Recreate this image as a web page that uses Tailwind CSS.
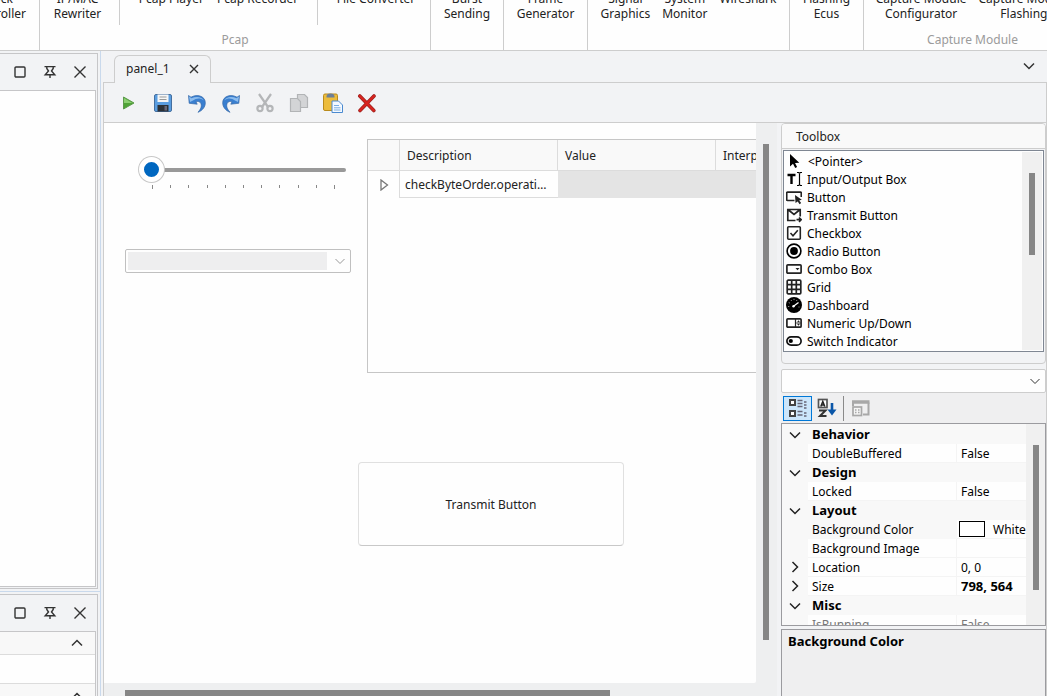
<!DOCTYPE html>
<html lang="en" class="h-full">

<head>
    <meta charset="UTF-8">
    <meta name="viewport" content="width=device-width, initial-scale=1.0">
    <title>panel_1</title>
    <script src="https://cdn.jsdelivr.net/npm/@tailwindcss/browser@4"></script>
</head>

<body class="h-screen flex flex-col overflow-hidden bg-[#f2f3f5] font-['Noto_Sans',sans-serif] text-[12px] leading-[15px] text-[#222]">
    <!-- Ribbon -->
    <header class="h-[51px] shrink-0 flex overflow-hidden bg-[#fefefe] border-b border-[#cdcdcd]">
        <div class="w-10 shrink-0 flex justify-end items-start pr-[13px] overflow-hidden border-r border-[#cdcdcd]">
            <button class="-mt-[9px] shrink-0">Clock<br>Controller</button>
        </div>
        <div class="w-[391px] shrink-0 flex flex-col border-r border-[#cdcdcd]">
            <div class="h-[25px] flex">
                <div class="w-20 flex justify-center items-start pr-1 border-r border-[#cdcdcd]">
                    <button class="-mt-[9px]">IP/MAC<br>Rewriter</button>
                </div>
                <div class="w-[198px] flex justify-center items-start gap-[13px] border-r border-[#cdcdcd]">
                    <button class="-mt-[9px]">Pcap Player</button>
                    <button class="-mt-[9px]">Pcap Recorder</button>
                </div>
                <div class="flex-1 flex justify-center items-start pl-1">
                    <button class="-mt-[9px]">File Converter</button>
                </div>
            </div>
            <p class="pt-[7px] text-center text-[#9b9b9b]">Pcap</p>
        </div>
        <div class="w-[73px] shrink-0 flex justify-center items-start border-r border-[#cdcdcd]">
            <button class="-mt-[9px]">Burst<br>Sending</button>
        </div>
        <div class="w-[84px] shrink-0 flex justify-center items-start border-r border-[#cdcdcd]">
            <button class="-mt-[9px]">Frame<br>Generator</button>
        </div>
        <div class="w-[202px] shrink-0 flex justify-center items-start gap-3 border-r border-[#cdcdcd]">
            <button class="-mt-[9px]">Signal<br>Graphics</button>
            <button class="-mt-[9px]">System<br>Monitor</button>
            <button class="-mt-[9px]">Wireshark</button>
        </div>
        <div class="w-[74px] shrink-0 flex justify-center items-start border-r border-[#cdcdcd]">
            <button class="-mt-[9px]">Flashing<br>Ecus</button>
        </div>
        <div class="w-[217px] shrink-0 flex flex-col">
            <div class="h-[25px] flex justify-center items-start gap-3">
                <button class="-mt-[9px]">Capture Module<br>Configurator</button>
                <button class="-mt-[9px]">Capture Module<br>Flashing</button>
            </div>
            <p class="pt-[7px] text-center text-[#9b9b9b]">Capture Module</p>
        </div>
    </header>

    <div class="flex-1 min-h-0 flex">
        <!-- Left dock -->
        <aside class="w-[101px] shrink-0 flex flex-col pt-0.5 border-r border-[#c9d9ec]">
            <section class="h-[536px] w-[98px] shrink-0 flex flex-col pr-px pb-px border-y border-r border-[#c6c6c8]">
                <div class="h-9 shrink-0 flex items-center justify-end gap-[14px] pr-2">
                    <button aria-label="Maximize">
                        <svg class="w-4 h-4" viewBox="0 0 16 16" fill="none" stroke="#333" stroke-width="1.4"><rect x="3" y="3" width="10" height="10" rx="1" /></svg>
                    </button>
                    <button aria-label="Pin">
                        <svg class="w-4 h-4" viewBox="0 0 16 16" fill="none" stroke="#333" stroke-width="1.4"><path d="M2.5 2.600h11M4.800 3v1.500L6.500 7 3.200 10.800h9.600L9.500 7l1.700-2.500V3M8 10.800V14" /></svg>
                    </button>
                    <button aria-label="Close">
                        <svg class="w-4 h-4" viewBox="0 0 16 16" fill="none" stroke="#333" stroke-width="1.4"><path d="M2.500 2.500l11 11M13.500 2.500l-11 11" /></svg>
                    </button>
                </div>
                <div class="flex-1 bg-[#fefefe] border-y border-r border-[#c6c6c8]"></div>
            </section>
            <div class="mt-0.5 h-px shrink-0 bg-[#c9d9ec]"></div>
            <section class="mt-0.5 w-[98px] flex-1 min-h-0 flex flex-col pr-px overflow-hidden border-t border-r border-[#c6c6c8]">
                <div class="h-9 shrink-0 flex items-center justify-end gap-[14px] pr-2">
                    <button aria-label="Maximize">
                        <svg class="w-4 h-4" viewBox="0 0 16 16" fill="none" stroke="#333" stroke-width="1.4"><rect x="3" y="3" width="10" height="10" rx="1" /></svg>
                    </button>
                    <button aria-label="Pin">
                        <svg class="w-4 h-4" viewBox="0 0 16 16" fill="none" stroke="#333" stroke-width="1.4"><path d="M2.5 2.600h11M4.800 3v1.500L6.500 7 3.200 10.800h9.600L9.500 7l1.700-2.500V3M8 10.800V14" /></svg>
                    </button>
                    <button aria-label="Close">
                        <svg class="w-4 h-4" viewBox="0 0 16 16" fill="none" stroke="#333" stroke-width="1.4"><path d="M2.500 2.500l11 11M13.500 2.500l-11 11" /></svg>
                    </button>
                </div>
                <div class="border-t border-r border-[#c6c6c8] bg-[#fefefe]">
                    <button aria-label="Collapse" class="w-full h-[23px] flex items-center justify-end pr-3 bg-[#f8f8f8] border-b border-[#dcdcdc]">
                        <svg class="w-3 h-3" viewBox="0 0 12 12" fill="none" stroke="#333" stroke-width="1.500"><path d="M1 8.500l5-5 5 5" /></svg>
                    </button>
                    <div class="h-7"></div>
                    <button aria-label="Collapse" class="w-full h-6 flex items-center justify-end pr-3 bg-[#f8f8f8] border-t border-[#dcdcdc]">
                        <svg class="w-3 h-3" viewBox="0 0 12 12" fill="none" stroke="#333" stroke-width="1.500"><path d="M1 8.500l5-5 5 5" /></svg>
                    </button>
                </div>
            </section>
        </aside>

        <!-- Document area -->
        <main class="flex-1 min-w-0 flex flex-col pl-0.5">
            <div class="h-8 shrink-0 flex items-end border-b border-[#cdcdcd] pl-[11px] pr-3">
                <div class="h-7 -mb-px w-[97px] flex items-center justify-between pl-[11px] pr-2.5 pb-0.5 bg-[#f2f3f5] border border-b-0 border-[#cdcdcd] rounded-t-md">
                    <span>panel_1</span>
                    <button aria-label="Close tab">
                        <svg class="w-3 h-3" viewBox="0 0 12 12" fill="none" stroke="#333" stroke-width="1.400"><path d="M2 2l8 8M10 2l-8 8" /></svg>
                    </button>
                </div>
                <button aria-label="Open documents" class="ml-auto mb-2.5">
                    <svg class="w-3 h-3" viewBox="0 0 12 12" fill="none" stroke="#333" stroke-width="1.500"><path d="M1 3.500l5 5 5-5" /></svg>
                </button>
            </div>

            <div class="flex-1 min-h-0 flex flex-col border-x border-[#cdcdcd]">
                <!-- Toolbar -->
                <div class="h-10 shrink-0 flex items-center gap-[14px] pl-[15px] border-b border-[#cdcdcd]">
                    <button aria-label="Run">
                        <svg class="w-5 h-5" viewBox="0 0 20 20"><path d="M4.500 4l10.500 6-10.500 6z" fill="#4fa336" stroke="#5c9a4a" /><path d="M5 5l8.500 5H5z" fill="#8bcf70" /></svg>
                    </button>
                    <button aria-label="Save">
                        <svg class="w-5 h-5" viewBox="0 0 20 20"><rect x="1.500" y="1.500" width="17" height="17" rx="1.500" fill="#5a9de0" stroke="#456f9f" /><path d="M4.500 1.500h11v7.500h-11z" fill="#f6f6f6" /><path d="M6.500 4h7M6.500 6.500h7" stroke="#999" /><path d="M4.500 12h11v6.500h-11z" fill="#2c3137" /><path d="M11.500 13h2.500v4.500h-2.500z" fill="#667" /></svg>
                    </button>
                    <button aria-label="Undo">
                        <svg class="w-5 h-5" viewBox="0 0 20 20"><path d="M1.500 2.500L4 4.200C10 .8 18 3 18.300 9.500c.1 4.500-2.800 8-7.300 9.800 3-3.500 4-6.300 2.800-9-.8-1.900-2.800-2.200-4.800-1.500l1.200 2.400-8-.9z" fill="#3a7fd0" stroke="#3668a8" stroke-width=".7" /><path d="M2 3.500l2.500 1.700C9 3 15 3.500 16.800 7.500 13 4.500 9 5.500 6 7.500L3 9z" fill="#8dbdee" /></svg>
                    </button>
                    <button aria-label="Redo">
                        <svg class="w-5 h-5" viewBox="0 0 20 20"><path d="M18.500 2.500L16 4.200C10 .8 2 3 1.700 9.500c-.1 4.500 2.800 8 7.300 9.800-3-3.500-4-6.300-2.800-9 .8-1.900 2.800-2.200 4.800-1.500l-1.200 2.400 8-.9z" fill="#3a7fd0" stroke="#3668a8" stroke-width=".7" /><path d="M18 3.500l-2.500 1.700C11 3 5 3.500 3.200 7.500 7 4.500 11 5.500 14 7.500L17 9z" fill="#8dbdee" /></svg>
                    </button>
                    <button aria-label="Cut">
                        <svg class="w-5 h-5" viewBox="0 0 20 20" fill="none" stroke="#b4b6b8" stroke-width="2.200"><path d="M4 1l9 13M16 1L7 14" /><circle cx="5" cy="15.500" r="2.600" /><circle cx="15" cy="15.500" r="2.600" /></svg>
                    </button>
                    <button aria-label="Copy">
                        <svg class="w-5 h-5" viewBox="0 0 20 20" fill="#d3d4d6" stroke="#b2b4b6" stroke-width="1.200"><path d="M8.500 1.500h7l3 3v10h-10z" /><path d="M1.500 5.500h7l3 3v10h-10z" /></svg>
                    </button>
                    <button aria-label="Paste">
                        <svg class="w-5 h-5" viewBox="0 0 20 20"><rect x=".5" y="1" width="14" height="16.500" rx="1.500" fill="#ecbc3c" stroke="#b98a1c" /><path d="M3.500 3.500C3.500 1.500 5 .5 7.500 .5s4 1 4 3v1h-8z" fill="#6d7f96" /><path d="M9 8h6.500l4 4v7.500H9z" fill="#f4f9ff" stroke="#4b8ad0" /><path d="M11 12.500h5M11 14.800h6.500M11 17h6.500" stroke="#7aaee2" /></svg>
                    </button>
                    <button aria-label="Delete">
                        <svg class="w-5 h-5" viewBox="0 0 20 20" fill="none" stroke-linecap="round"><path d="M2.800 3l14 14.500M17 3L3 17.500" stroke="#9c2320" stroke-width="3.600" /><path d="M2.800 3l14 14.500M17 3L3 17.500" stroke="#d8241f" stroke-width="2.200" /></svg>
                    </button>
                </div>

                <div class="flex-1 min-h-0 flex">
                    <!-- Design surface -->
                    <div class="flex-1 min-w-0 flex flex-col bg-[#eeeff0]">
                        <div class="h-[560px] shrink-0 flex">
                            <div class="relative flex-1 overflow-hidden bg-[#fefefe] rounded-br-xs">
                                <!-- track bar -->
                                <div class="absolute left-[35px] top-[34px] w-[207px]">
                                    <input type="range" min="0" max="10" value="0" aria-label="Track bar"
                                        class="block w-full h-[25px] appearance-none bg-transparent [&::-webkit-slider-runnable-track]:h-1 [&::-webkit-slider-runnable-track]:rounded-full [&::-webkit-slider-runnable-track]:bg-[#999] [&::-webkit-slider-thumb]:appearance-none [&::-webkit-slider-thumb]:w-[25px] [&::-webkit-slider-thumb]:h-[25px] [&::-webkit-slider-thumb]:-mt-[11px] [&::-webkit-slider-thumb]:rounded-full [&::-webkit-slider-thumb]:border-[5px] [&::-webkit-slider-thumb]:border-white [&::-webkit-slider-thumb]:bg-[#0067c0] [&::-webkit-slider-thumb]:shadow-[0_0_0_1px_#c8c8c8]">
                                    <div class="mt-[3px] ml-[13px] w-[183px] flex justify-between">
                                        <i class="w-px h-1 bg-[#888]"></i>
                                        <i class="w-px h-[3px] bg-[#888]"></i>
                                        <i class="w-px h-[3px] bg-[#888]"></i>
                                        <i class="w-px h-[3px] bg-[#888]"></i>
                                        <i class="w-px h-[3px] bg-[#888]"></i>
                                        <i class="w-px h-[3px] bg-[#888]"></i>
                                        <i class="w-px h-[3px] bg-[#888]"></i>
                                        <i class="w-px h-[3px] bg-[#888]"></i>
                                        <i class="w-px h-[3px] bg-[#888]"></i>
                                        <i class="w-px h-[3px] bg-[#888]"></i>
                                        <i class="w-px h-1 bg-[#888]"></i>
                                    </div>
                                </div>
                                <!-- combo box -->
                                <div class="absolute left-[21px] top-[126px] w-[226px] h-6 flex items-center p-0.5 pr-1 bg-[#fefefe] border border-[#c0c0c0] rounded-xs">
                                    <select aria-label="Combo box" class="flex-1 h-[18px] appearance-none bg-[#eeeeef]"><option></option></select>
                                    <svg class="w-3 h-3 ml-[7px]" viewBox="0 0 12 12" fill="none" stroke="#999"><path d="M1.500 4L6 8.500 10.500 4" /></svg>
                                </div>
                                <!-- signal grid -->
                                <div class="absolute left-[263px] top-4 w-[600px] h-[234px] border border-[#c6c6c6]">
                                    <table class="w-full table-fixed border-separate border-spacing-0 text-left">
                                        <thead>
                                            <tr class="h-[31px] bg-[#f9f9f9]">
                                                <th class="w-8 border-r border-b border-[#dcdcdc]"></th>
                                                <th class="w-[158px] px-[7px] font-normal border-r border-b border-[#dcdcdc]">Description</th>
                                                <th class="w-[158px] px-[7px] font-normal border-r border-b border-[#dcdcdc]">Value</th>
                                                <th class="px-[7px] font-normal border-b border-[#dcdcdc]">Interpretation</th>
                                            </tr>
                                        </thead>
                                        <tbody>
                                            <tr class="h-[27px]">
                                                <td class="border-r border-[#dcdcdc]">
                                                    <svg class="w-3 h-3 ml-2.5" viewBox="0 0 12 12" fill="none" stroke="#777" stroke-width="1.300"><path d="M3 1L9.500 6 3 11z" /></svg>
                                                </td>
                                                <td class="px-[5px] truncate border-b border-[#dcdcdc]">checkByteOrder.operationResult</td>
                                                <td class="bg-[#e4e4e4]"></td>
                                                <td class="bg-[#e4e4e4]"></td>
                                            </tr>
                                        </tbody>
                                    </table>
                                </div>
                                <button class="absolute left-[254px] top-[339px] w-[266px] h-[84px] rounded border border-[#e0e0e0] border-b-[#c8c8c8]">Transmit Button</button>
                            </div>
                            <div class="w-[21px] shrink-0 pl-[7px] pt-[21px]">
                                <div class="w-1.5 h-[496px] bg-[#868686]"></div>
                            </div>
                        </div>
                        <div class="pl-[21px] pt-[7px]">
                            <div class="w-[485px] h-1.5 bg-[#868686]"></div>
                        </div>
                    </div>

                    <!-- Toolbox and properties -->
                    <div class="w-[269px] shrink-0 flex flex-col pl-1 text-black">
                        <section class="h-[241px] shrink-0 flex flex-col border border-[#cdcdcd] rounded overflow-hidden">
                            <h2 class="h-[25px] flex items-center pl-[14px] bg-[#f9f9f9] border-b border-[#cdcdcd] text-[#222]">Toolbox</h2>
                            <div class="mt-px mx-px h-[202px] flex border border-[#7f8793] bg-[#fefefe]">
                                <ul class="flex-1 pt-px pl-0.5">
                                    <li class="h-[18px] flex items-center gap-1.5">
                                        <svg class="w-4 h-4" viewBox="0 0 16 16"><path d="M4 1v12.500l3-2.700 2.200 4.200 1.900-.9-2.100-4.100 4.300-.2z" /></svg>
                                        &lt;Pointer&gt;
                                    </li>
                                    <li class="h-[18px] flex items-center gap-[5px]">
                                        <svg class="w-4 h-4" viewBox="0 0 16 16" fill="none" stroke="#000"><path d="M1.500 4h8M5.500 4v9" stroke-width="2.400" /><path d="M11 1.500h1.500l1 .8 1-.8H16M13.500 2v12M11 14.500h1.500l1-.8 1 .8H16" stroke-width="1.200" /></svg>
                                        Input/Output Box
                                    </li>
                                    <li class="h-[18px] flex items-center gap-[5px]">
                                        <svg class="w-4 h-4" viewBox="0 0 16 16"><path d="M8.500 11.500H1.500a.8.800 0 01-.8-.8V4a.8.800 0 01.8-.8h13a.8.800 0 01.8.8v4" fill="none" stroke="#222" stroke-width="1.700" /><path d="M9 6l6.800 4.700-2.600.8 2 2.600-1.600 1.200-1.900-2.700L9.500 14z" fill="#222" /></svg>
                                        Button
                                    </li>
                                    <li class="h-[18px] flex items-center gap-[5px]">
                                        <svg class="w-4 h-4" viewBox="0 0 16 16" fill="none" stroke="#222" stroke-width="1.700"><path d="M9.500 13.500H1.800V2.500h12.400v7M2.500 3l5.500 4.500L13.500 3" /><path d="M10.500 12.700h4M13 10.500l2.200 2.200-2.200 2.200" /></svg>
                                        Transmit Button
                                    </li>
                                    <li class="h-[18px] flex items-center gap-[5px]">
                                        <svg class="w-4 h-4" viewBox="0 0 16 16" fill="none" stroke="#222" stroke-width="1.600"><rect x="1.700" y="1.700" width="12.600" height="12.600" rx="1" /><path d="M4.500 8l2.500 2.700L11.800 5.300" /></svg>
                                        Checkbox
                                    </li>
                                    <li class="h-[18px] flex items-center gap-[5px]">
                                        <svg class="w-4 h-4" viewBox="0 0 16 16"><circle cx="8" cy="8" r="6.900" fill="none" stroke="#000" stroke-width="1.600" /><circle cx="8" cy="8" r="3.900" /></svg>
                                        Radio Button
                                    </li>
                                    <li class="h-[18px] flex items-center gap-[5px]">
                                        <svg class="w-4 h-4" viewBox="0 0 16 16"><rect x=".9" y="3.800" width="14.200" height="8.400" rx="1" fill="none" stroke="#222" stroke-width="1.700" /><path d="M9.500 7h4l-2 2.200z" fill="#222" /></svg>
                                        Combo Box
                                    </li>
                                    <li class="h-[18px] flex items-center gap-[5px]">
                                        <svg class="w-4 h-4" viewBox="0 0 16 16" fill="none" stroke="#222" stroke-width="1.700"><rect x="1.200" y="1.200" width="13.600" height="13.600" rx="1" /><path d="M5.700 1v14M10.300 1v14M1 5.700h14M1 10.300h14" /></svg>
                                        Grid
                                    </li>
                                    <li class="h-[18px] flex items-center gap-[5px]">
                                        <svg class="w-4 h-4" viewBox="0 0 16 16"><circle cx="8" cy="8" r="8" /><path d="M7.500 9.200l5-3.700" stroke="#fff" stroke-width="1.300" /><circle cx="7.500" cy="9.200" r="1.200" fill="#fff" /><path d="M2 9.500h1.300M2.700 5.500l1.200.6M5 3l.7 1M8 1.800v1.300M11 3l-.6 1M13.500 10h-1" stroke="#ccc" stroke-width=".7" /></svg>
                                        Dashboard
                                    </li>
                                    <li class="h-[18px] flex items-center gap-[5px]">
                                        <svg class="w-4 h-4" viewBox="0 0 16 16" fill="none" stroke="#222" stroke-width="1.700"><rect x=".9" y="3.800" width="14.200" height="8.400" rx="1" /><path d="M9.500 4v8" stroke-width="1.200" /><path d="M11 7.200h3l-1.500-2zM11 8.800h3l-1.500 2z" fill="#222" stroke="none" /><path d="M10 8h5" stroke-width=".7" /></svg>
                                        Numeric Up/Down
                                    </li>
                                    <li class="h-[18px] flex items-center gap-[5px]">
                                        <svg class="w-4 h-4" viewBox="0 0 16 16"><rect x=".9" y="3.800" width="14.200" height="8.400" rx="4.200" fill="none" stroke="#111" stroke-width="1.700" /><circle cx="4.800" cy="8" r="2.100" /></svg>
                                        Switch Indicator
                                    </li>
                                </ul>
                                <div class="my-px mr-px w-5 pl-[7px] pt-[21px] bg-[#f0f0f0]">
                                    <div class="w-1.5 h-[82px] bg-[#868686]"></div>
                                </div>
                            </div>
                        </section>

                        <div class="mt-[5px] h-6 shrink-0 flex items-center pr-1 bg-[#fefefe] border border-[#cdcdcd] rounded-xs">
                            <select aria-label="Selected component" class="flex-1 h-full appearance-none"><option></option></select>
                            <svg class="w-3 h-3" viewBox="0 0 12 12" fill="none" stroke="#333"><path d="M1.500 4L6 8.500 10.500 4" /></svg>
                        </div>

                        <div class="h-[30px] shrink-0 flex items-center pl-0.5 bg-[#efeff0]">
                            <button aria-label="Categorized" class="w-[29px] h-[25px] flex items-center justify-center bg-[#cce6fb] border border-[#0078d7]">
                                <svg class="w-5 h-5" viewBox="0 0 20 20" fill="#fff" stroke="#444" stroke-width="2"><rect x="2" y="2" width="5" height="5" /><rect x="2" y="13" width="5" height="5" /><path d="M9.500 2.500h5M9.500 5.500h5M9.500 8.500h5M9.500 13.500h5M9.500 17h5" stroke="#667" stroke-width="1.500" /><path d="M16 4h2.500M16 7h2.500M16 10h2.500M16 15h2.500M16 18h2.500" stroke="#667" stroke-width="1.500" /></svg>
                            </button>
                            <button aria-label="Alphabetical" class="w-[29px] h-[25px] flex items-center justify-center">
                                <svg class="w-5 h-5" viewBox="0 0 20 20" fill="none"><rect x="1.500" y="1.500" width="8.500" height="8" fill="#fff" stroke="#555" stroke-width="1.700" /><path d="M3.800 8.500l2-5 2 5M4.500 7h3" stroke="#222" stroke-width="1.500" /><path d="M2 12.500h6.500l-5.500 5.500h6.500" stroke="#333" stroke-width="2" /><path d="M15 5v9" stroke="#0a56a8" stroke-width="2.600" /><path d="M10.500 11.500h9L15 17.500z" fill="#0a56a8" /></svg>
                            </button>
                            <div class="ml-[2px] w-px h-[25px] bg-[#8a8a8a]"></div>
                            <button aria-label="Property pages" class="ml-[7px]" disabled>
                                <svg class="w-5 h-5" viewBox="0 0 20 20" fill="none" stroke="#a8a8a8"><path d="M1 4h17.500" stroke-width="3.500" /><path d="M2 5v3M12 16.500h5.500V4.500" stroke-width="2" /><rect x="2" y="9" width="8.500" height="8.500" fill="#f5f5f5" stroke-width="1.700" /><path d="M4 12h1.500M7 12h1.500M4 14.500h1.500M7 14.500h1.500" stroke-width="1.500" /></svg>
                            </button>
                        </div>

                        <!-- Property grid -->
                        <div class="h-[203px] shrink-0 flex overflow-hidden bg-[#f8f8f8] border border-[#9b9b9f]">
                            <table class="flex-1 block mt-px">
                                <tbody class="block">
                                    <tr class="flex h-[19px] items-center">
                                        <td class="w-[26px] shrink-0"><svg class="w-3 h-3 ml-[7px]" viewBox="0 0 12 12" fill="none" stroke="#222" stroke-width="1.500"><path d="M1 3.500l5 5 5-5" /></svg></td>
                                        <th class="pl-1 text-[13px] font-bold">Behavior</th>
                                    </tr>
                                    <tr class="flex h-[19px]">
                                        <td class="w-[26px] shrink-0"></td>
                                        <td class="w-[149px] shrink-0 pl-1 pt-0.5 bg-[#fefefe] border-r border-b border-[#f4f4f4]">DoubleBuffered</td>
                                        <td class="flex-1 pl-1 pt-0.5 bg-[#fefefe] border-b border-[#f4f4f4]">False</td>
                                    </tr>
                                    <tr class="flex h-[19px] items-center">
                                        <td class="w-[26px] shrink-0"><svg class="w-3 h-3 ml-[7px]" viewBox="0 0 12 12" fill="none" stroke="#222" stroke-width="1.500"><path d="M1 3.500l5 5 5-5" /></svg></td>
                                        <th class="pl-1 text-[13px] font-bold">Design</th>
                                    </tr>
                                    <tr class="flex h-[19px]">
                                        <td class="w-[26px] shrink-0"></td>
                                        <td class="w-[149px] shrink-0 pl-1 pt-0.5 bg-[#fefefe] border-r border-b border-[#f4f4f4]">Locked</td>
                                        <td class="flex-1 pl-1 pt-0.5 bg-[#fefefe] border-b border-[#f4f4f4]">False</td>
                                    </tr>
                                    <tr class="flex h-[19px] items-center">
                                        <td class="w-[26px] shrink-0"><svg class="w-3 h-3 ml-[7px]" viewBox="0 0 12 12" fill="none" stroke="#222" stroke-width="1.500"><path d="M1 3.500l5 5 5-5" /></svg></td>
                                        <th class="pl-1 text-[13px] font-bold">Layout</th>
                                    </tr>
                                    <tr class="flex h-[19px]">
                                        <td class="w-[26px] shrink-0"></td>
                                        <td class="w-[149px] shrink-0 pl-1 pt-0.5">Background Color</td>
                                        <td class="flex-1 min-w-0 flex items-center gap-2 pl-0.5 overflow-hidden bg-[#fefefe] border-b border-[#f4f4f4]"><span class="w-[26px] h-4 shrink-0 bg-white border border-black"></span>White</td>
                                    </tr>
                                    <tr class="flex h-[19px]">
                                        <td class="w-[26px] shrink-0"></td>
                                        <td class="w-[149px] shrink-0 pl-1 pt-0.5 bg-[#fefefe] border-r border-b border-[#f4f4f4]">Background Image</td>
                                        <td class="flex-1 bg-[#fefefe] border-b border-[#f4f4f4]"></td>
                                    </tr>
                                    <tr class="flex h-[19px]">
                                        <td class="w-[26px] shrink-0 pt-[3px]"><svg class="w-3 h-3 ml-[7px]" viewBox="0 0 12 12" fill="none" stroke="#222" stroke-width="1.500"><path d="M3.500 1l5 5-5 5" /></svg></td>
                                        <td class="w-[149px] shrink-0 pl-1 pt-0.5 bg-[#fefefe] border-r border-b border-[#f4f4f4]">Location</td>
                                        <td class="flex-1 pl-1 pt-0.5 bg-[#fefefe] border-b border-[#f4f4f4]">0, 0</td>
                                    </tr>
                                    <tr class="flex h-[19px]">
                                        <td class="w-[26px] shrink-0 pt-[3px]"><svg class="w-3 h-3 ml-[7px]" viewBox="0 0 12 12" fill="none" stroke="#222" stroke-width="1.500"><path d="M3.500 1l5 5-5 5" /></svg></td>
                                        <td class="w-[149px] shrink-0 pl-1 pt-0.5 bg-[#fefefe] border-r border-b border-[#f4f4f4]">Size</td>
                                        <td class="flex-1 pl-1 pt-0.5 bg-[#fefefe] border-b border-[#f4f4f4] text-[13px] font-bold">798, 564</td>
                                    </tr>
                                    <tr class="flex h-[19px] items-center">
                                        <td class="w-[26px] shrink-0"><svg class="w-3 h-3 ml-[7px]" viewBox="0 0 12 12" fill="none" stroke="#222" stroke-width="1.500"><path d="M1 3.500l5 5 5-5" /></svg></td>
                                        <th class="pl-1 text-[13px] font-bold">Misc</th>
                                    </tr>
                                    <tr class="flex h-[19px] text-[#777]">
                                        <td class="w-[26px] shrink-0"></td>
                                        <td class="w-[149px] shrink-0 pl-1 pt-0.5 bg-[#fefefe] border-r border-[#f4f4f4]">IsRunning</td>
                                        <td class="flex-1 pl-1 pt-0.5 bg-[#fefefe]">False</td>
                                    </tr>
                                </tbody>
                            </table>
                            <div class="w-5 shrink-0 mr-px pl-[7px] pt-[21px] bg-[#f0f0f0]">
                                <div class="w-1.5 h-[145px] bg-[#868686]"></div>
                            </div>
                        </div>
                        <div class="mt-[3px] flex-1 min-h-0 pl-1.5 pt-1 bg-[#efeff0] border border-b-0 border-[#9b9b9f]">
                            <p class="text-[13px] font-bold">Background Color</p>
                        </div>
                    </div>
                </div>
            </div>
        </main>
    </div>
</body>

</html>
